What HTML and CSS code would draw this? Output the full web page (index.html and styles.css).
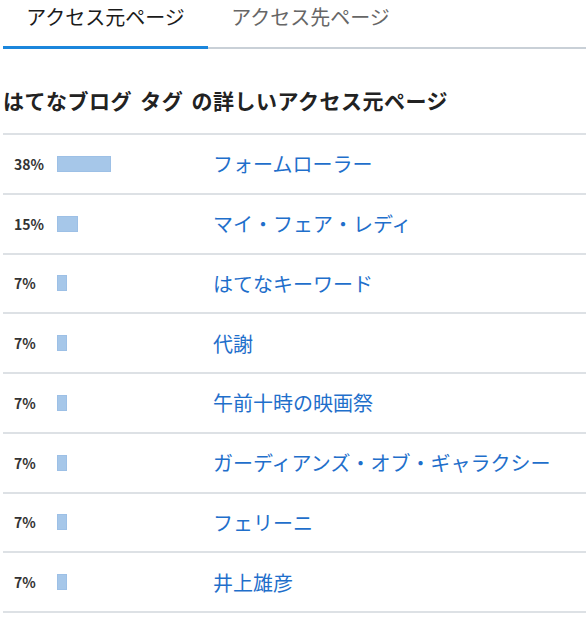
FILE: index.html
```html
<!DOCTYPE html>
<html lang="ja">
<head>
<meta charset="utf-8">
<link rel="stylesheet" href="styles.css">
</head>
<body>
<div class="tabs">
  <div class="tab active">アクセス元ページ</div>
  <div class="tab">アクセス先ページ</div>
</div>
<h2 class="heading">はてなブログ タグ の詳しいアクセス元ページ</h2>
<ul class="list">
  <li class="row"><span class="pct">38%</span><span class="bar-wrap"><span class="bar" style="width:54px"></span></span><a class="link" href="#">フォームローラー</a></li>
  <li class="row"><span class="pct">15%</span><span class="bar-wrap"><span class="bar" style="width:21px"></span></span><a class="link" href="#">マイ・フェア・レディ</a></li>
  <li class="row"><span class="pct">7%</span><span class="bar-wrap"><span class="bar" style="width:10px"></span></span><a class="link" href="#">はてなキーワード</a></li>
  <li class="row"><span class="pct">7%</span><span class="bar-wrap"><span class="bar" style="width:10px"></span></span><a class="link" href="#">代謝</a></li>
  <li class="row"><span class="pct">7%</span><span class="bar-wrap"><span class="bar" style="width:10px"></span></span><a class="link" href="#">午前十時の映画祭</a></li>
  <li class="row"><span class="pct">7%</span><span class="bar-wrap"><span class="bar" style="width:10px"></span></span><a class="link" href="#">ガーディアンズ・オブ・ギャラクシー</a></li>
  <li class="row"><span class="pct">7%</span><span class="bar-wrap"><span class="bar" style="width:10px"></span></span><a class="link" href="#">フェリーニ</a></li>
  <li class="row"><span class="pct">7%</span><span class="bar-wrap"><span class="bar" style="width:10px"></span></span><a class="link" href="#">井上雄彦</a></li>
</ul>
</body>
</html>
```
FILE: styles.css
```css
html, body {
  margin: 0;
  padding: 0;
  background: #fff;
}
body {
  font-family: "Noto Sans CJK JP", "Noto Sans", sans-serif;
  color: #222;
  overflow: hidden;
}
.tabs {
  display: flex;
  margin-left: 3px;
  border-bottom: 2px solid #c9d0d7;
}
.tab {
  width: 205px;
  height: 46px;
  line-height: 34px;
  font-size: 20px;
  text-align: center;
  color: #666;
  border-bottom: 3px solid transparent;
  margin-bottom: -2px;
}
.tab.active {
  color: #1a1a1a;
  border-bottom-color: #1b86dc;
}
.heading {
  margin: 36px 0 18px 3px;
  font-size: 21px;
  line-height: 30px;
  font-weight: bold;
  color: #222;
  word-spacing: 3px;
  letter-spacing: 0.5px;
}
.list {
  list-style: none;
  margin: 0 0 0 3px;
  padding: 0;
  border-top: 2px solid #dde1e5;
}
.row {
  display: flex;
  align-items: center;
  height: 57.75px;
  padding-left: 11px;
  border-bottom: 2px solid #dde1e5;
}
.pct {
  width: 43px;
  font-size: 14px;
  font-weight: bold;
  color: #333;
}
.bar-wrap {
  width: 156px;
  display: flex;
  align-items: center;
}
.bar {
  display: block;
  height: 16px;
  box-sizing: border-box;
  background: #a6c7e9;
  border: 1px solid #9dc0e6;
}
.link {
  font-size: 20px;
  color: #1f6fcb;
  text-decoration: none;
}
```
